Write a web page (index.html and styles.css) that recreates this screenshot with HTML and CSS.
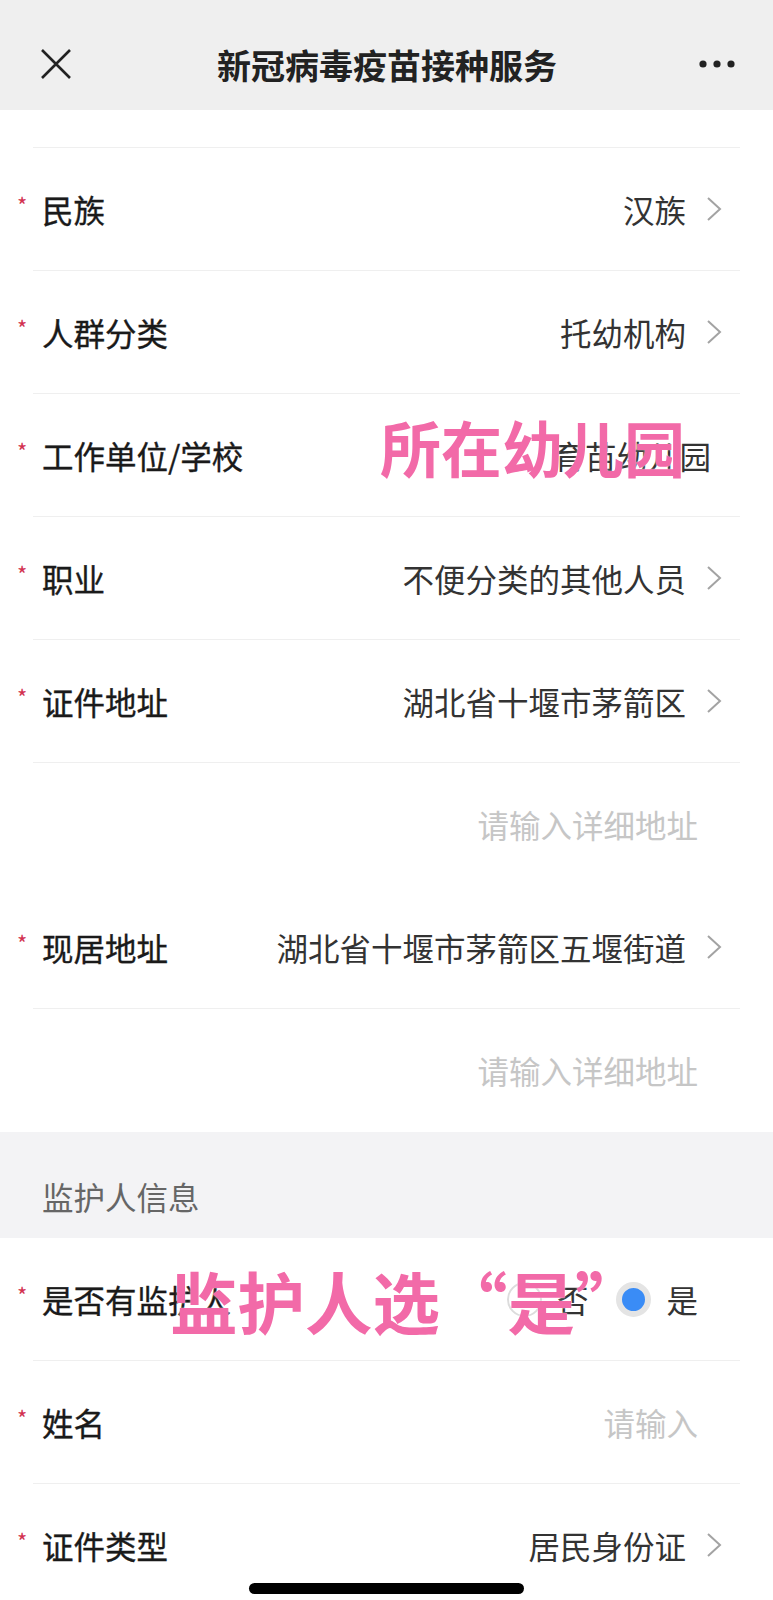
FILE: index.html
```html
<!DOCTYPE html>
<html lang="zh-CN">
<head>
<meta charset="utf-8">
<title>新冠病毒疫苗接种服务</title>
<link rel="stylesheet" href="styles.css">
</head>
<body>
<div class="page">
  <header class="topbar">
    <svg class="close" width="30" height="30" viewBox="0 0 30 30"><path d="M1 1L29 29M29 1L1 29" stroke="#222" stroke-width="2.6" fill="none"/></svg>
    <div class="title">新冠病毒疫苗接种服务</div>
    <svg class="more" width="36" height="10" viewBox="0 0 36 10"><circle cx="4" cy="5" r="3.6" fill="#222"/><circle cx="18" cy="5" r="3.6" fill="#222"/><circle cx="32" cy="5" r="3.6" fill="#222"/></svg>
  </header>

  <section class="form">
    <div class="row partial"></div>
    <div class="row arrow"><span class="req">*</span><span class="label">民族</span><span class="value">汉族</span><svg class="chev" width="16" height="26" viewBox="0 0 16 26"><path d="M2 2L14 13L2 24" stroke="#a3a3a3" stroke-width="2" fill="none"/></svg></div>
    <div class="row arrow"><span class="req">*</span><span class="label">人群分类</span><span class="value">托幼机构</span><svg class="chev" width="16" height="26" viewBox="0 0 16 26"><path d="M2 2L14 13L2 24" stroke="#a3a3a3" stroke-width="2" fill="none"/></svg></div>
    <div class="row plain"><span class="req">*</span><span class="label">工作单位/学校</span><span class="value">育苗幼儿园</span><span class="mark mark1">所在幼儿园</span></div>
    <div class="row arrow"><span class="req">*</span><span class="label">职业</span><span class="value">不便分类的其他人员</span><svg class="chev" width="16" height="26" viewBox="0 0 16 26"><path d="M2 2L14 13L2 24" stroke="#a3a3a3" stroke-width="2" fill="none"/></svg></div>
    <div class="row arrow"><span class="req">*</span><span class="label">证件地址</span><span class="value">湖北省十堰市茅箭区</span><svg class="chev" width="16" height="26" viewBox="0 0 16 26"><path d="M2 2L14 13L2 24" stroke="#a3a3a3" stroke-width="2" fill="none"/></svg></div>
    <div class="row input noline"><span class="placeholder">请输入详细地址</span></div>
    <div class="row arrow"><span class="req">*</span><span class="label">现居地址</span><span class="value">湖北省十堰市茅箭区五堰街道</span><svg class="chev" width="16" height="26" viewBox="0 0 16 26"><path d="M2 2L14 13L2 24" stroke="#a3a3a3" stroke-width="2" fill="none"/></svg></div>
    <div class="row input noline"><span class="placeholder">请输入详细地址</span></div>
  </section>

  <div class="section-head">监护人信息</div>

  <section class="form">
    <div class="row input"><span class="req">*</span><span class="label">是否有监护人</span>
      <div class="radios">
        <span class="opt"><span class="radio"></span><span class="opt-text">否</span></span>
        <span class="opt"><span class="radio on"></span><span class="opt-text">是</span></span>
      </div>
      <span class="mark mark2">监护人选<span class="q ql">“</span>是<span class="q qr">”</span></span>
    </div>
    <div class="row input"><span class="req">*</span><span class="label">姓名</span><span class="placeholder">请输入</span></div>
    <div class="row arrow noline"><span class="req">*</span><span class="label">证件类型</span><span class="value">居民身份证</span><svg class="chev" width="16" height="26" viewBox="0 0 16 26"><path d="M2 2L14 13L2 24" stroke="#a3a3a3" stroke-width="2" fill="none"/></svg></div>
  </section>

  <div class="home-indicator"></div>
</div>
</body>
</html>
```

FILE: styles.css
```css
* { box-sizing: border-box; }
html, body { margin: 0; padding: 0; }
body {
  background: #fff;
  font-family: "Noto Sans CJK SC", "Noto Sans", sans-serif;
  color: #333;
  width: 773px;
  height: 1600px;
  overflow: hidden;
}
.page { position: relative; width: 773px; height: 1600px; overflow: hidden; }

.topbar {
  height: 110px;
  background: #efefef;
  display: flex;
  align-items: center;
  padding: 18px 38px 0 41px;
}
.close { flex: none; }
.title {
  flex: 1;
  text-align: center;
  font-size: 34px;
  font-weight: 700;
  color: #222;
  margin-left: 4px;
}
.more { flex: none; }

.form { background: #fff; }
.row {
  position: relative;
  margin: 0 33px;
  height: 123px;
  border-bottom: 1px solid #efefef;
  display: flex;
  align-items: center;
  font-size: 31.5px;
  line-height: 32px;
}
.row.partial { height: 38px; }
.row.noline { border-bottom-color: transparent; }
.row.arrow { padding-right: 18px; }
.row.plain { padding-right: 29px; }
.row.input { padding-right: 42px; }

.req {
  width: 8px;
  margin-left: -16px;
  margin-right: 17px;
  color: #d23250;
  font-size: 22px;
  line-height: 22px;
  position: relative;
  top: -5px;
  text-align: center;
}
.label {
  color: #1a1a1a;
  font-weight: 400;
  white-space: nowrap;
  -webkit-text-stroke: 0.35px #1a1a1a;
}
.value { margin-left: auto; color: #333; white-space: nowrap; }
.row.arrow .value { margin-right: 20px; }
.chev { flex: none; }
.placeholder { margin-left: auto; color: #c6c6c6; white-space: nowrap; }

.section-head {
  height: 106px;
  background: #f3f3f5;
  padding: 22px 0 0 42px;
  display: flex;
  align-items: center;
  font-size: 31.5px;
  color: #666;
}

.radios { margin-left: auto; display: flex; align-items: center; gap: 28px; }
.opt { display: flex; align-items: center; gap: 15px; }
.opt-text { color: #333; }
.radio {
  width: 35px;
  height: 35px;
  border-radius: 50%;
  border: 2px solid #dcdcdc;
  background: #fff;
}
.radio.on {
  border: 6px solid #e4e4e4;
  background: #3a8cf6;
}

.mark {
  position: absolute;
  color: #f26aa8;
  font-weight: 700;
  white-space: nowrap;
  text-shadow: 0 0 2px rgba(255,255,255,0.9);
}
.mark1 { left: 347px; top: 22px; font-size: 61px; line-height: 62px; }
.mark2 { left: 137px; top: 28px; font-size: 67.5px; line-height: 68px; }
.q { display: inline-block; width: 1em; }
.ql { text-align: right; }
.qr { text-align: left; }

.home-indicator {
  position: absolute;
  left: 249px;
  top: 1583px;
  width: 275px;
  height: 11px;
  border-radius: 6px;
  background: #000;
}
```
